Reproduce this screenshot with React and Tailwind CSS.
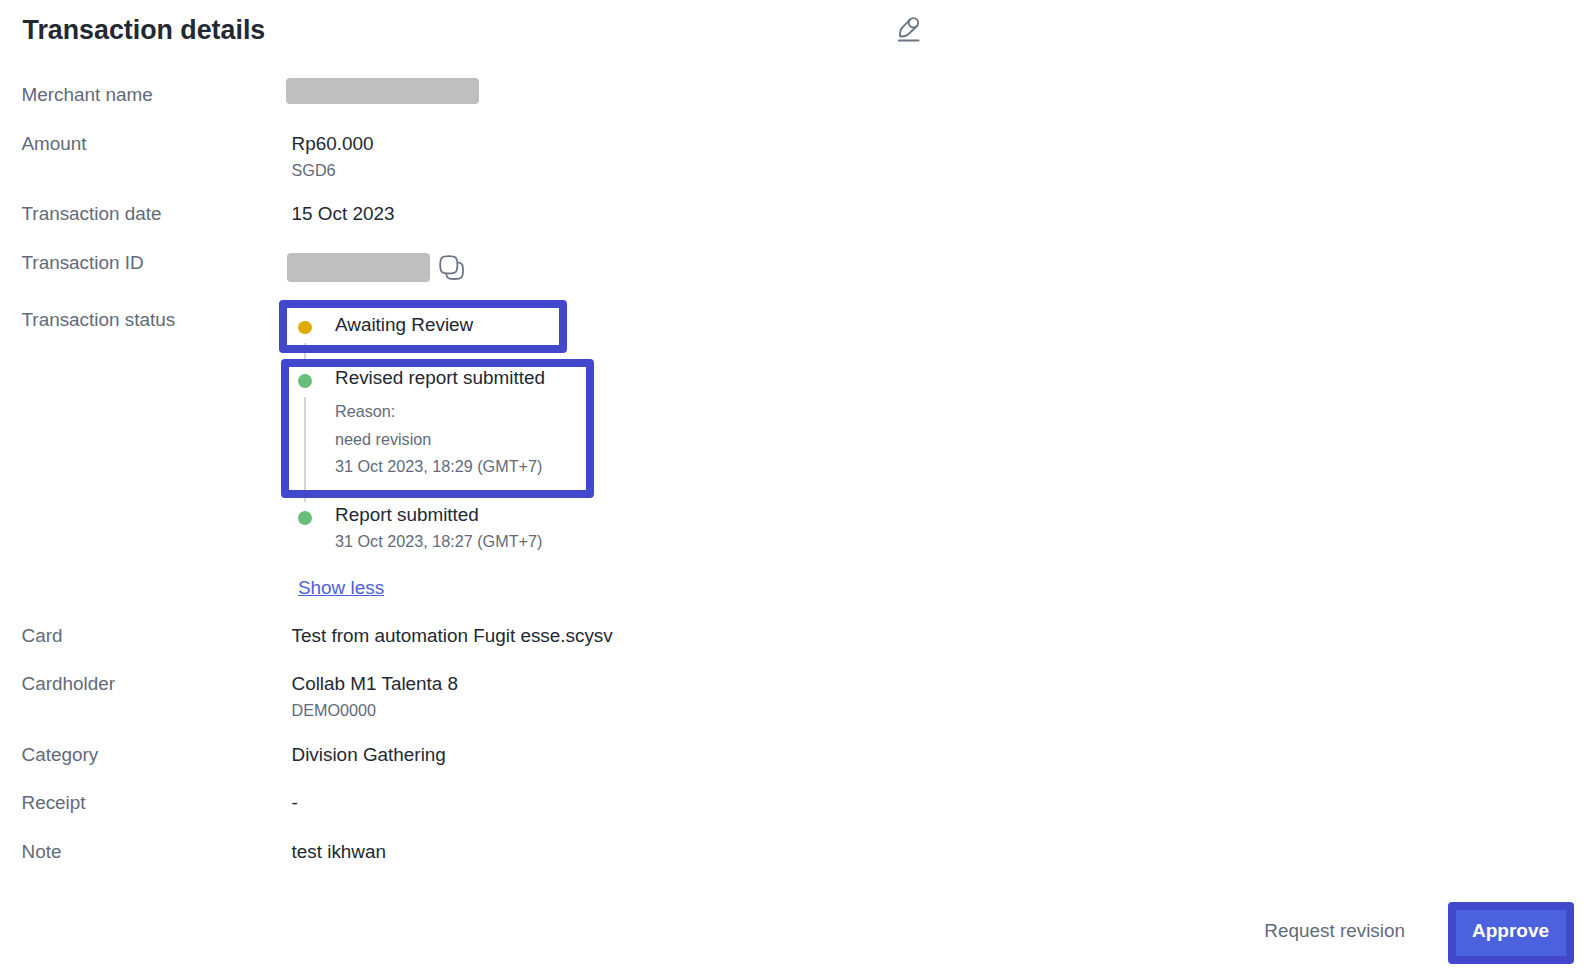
import React from "react";

const EditIcon = () => (
  <svg width="24" height="26" viewBox="0 0 24 26" fill="none" stroke="#6b7584" strokeWidth="1.9" strokeLinecap="round" strokeLinejoin="round">
    <circle cx="16.4" cy="5.8" r="4.7" />
    <path d="M12.9 2.7 5 10.9C3.2 13 2.8 16.4 3.2 19.5C6.2 19.7 9 19.2 11 17.5L19.7 9.2" />
    <path d="M1.8 23.5H21.6" />
  </svg>
);

const CopyIcon = () => (
  <svg width="26" height="26" viewBox="0 0 26 26" fill="none" stroke="#6b7584" strokeWidth="1.8">
    <path d="M9.8 1.2C17 1.2 18.4 2.6 18.4 9.8C18.4 17 17 18.4 9.8 18.4C2.6 18.4 1.2 17 1.2 9.8C1.2 2.6 2.6 1.2 9.8 1.2Z" />
    <path d="M18.4 7.3C23 7.6 24 9.2 24 15.4C24 22.6 22.6 24 15.4 24C9.4 24 7.6 23 7.2 18.4" />
  </svg>
);

const Row = ({ label, className, children }) => (
  <div className={`flex shrink-0 ${className}`}>
    <div className="w-[270px] shrink-0 text-[#626b79]">{label}</div>
    <div>{children}</div>
  </div>
);

const SubText = ({ children }) => (
  <p className="pt-px text-[16.2px] leading-6 text-[#626b79]">{children}</p>
);

const Dot = ({ className }) => (
  <span className={`mt-[9px] block h-3.5 w-3.5 rounded-full ${className}`} />
);

const App = () => {
  return (
    <div className="flex h-[969px] w-[1587px] flex-col overflow-hidden bg-white pl-[21.5px] font-['Liberation_Sans',Arial,sans-serif] text-[18.9px] leading-[26px] text-[#232933]">
      <div className="flex h-[82px] w-[899px] shrink-0 justify-between pt-4">
        <h1 className="pl-px text-[26.8px] leading-7 font-bold">Transaction details</h1>
        <button className="mt-px flex h-[26px] w-6" title="Edit">
          <EditIcon />
        </button>
      </div>

      <Row label="Merchant name" className="h-[49px]">
        <div className="-mt-1 -ml-[5.5px] h-[26px] w-[193px] rounded bg-[#bfbfbf]" />
      </Row>

      <Row label="Amount" className="h-[70px]">
        <p>Rp60.000</p>
        <SubText>SGD6</SubText>
      </Row>

      <Row label="Transaction date" className="h-[49px]">15 Oct 2023</Row>

      <Row label="Transaction ID" className="h-[57px]">
        <div className="-ml-[4.5px] flex gap-[9px] pt-[3px]">
          <div className="h-[29px] w-[143px] rounded bg-[#bfbfbf]" />
          <div className="pt-0.5">
            <CopyIcon />
          </div>
        </div>
      </Row>

      <Row label="Transaction status" className="h-[316px]">
        <div className="relative pt-[5px]">
          <div className="flex h-[53px] gap-[23px] pl-[6.5px]">
            <div className="flex flex-col items-center">
              <Dot className="bg-[#e0ab00]" />
              <span className="mt-[9px] h-[22px] w-0.5 shrink-0 bg-[#d0d6dd]" />
            </div>
            <p>Awaiting Review</p>
          </div>

          <div className="flex h-[137px] gap-[23px] pl-[6.5px]">
            <div className="flex flex-col items-center">
              <Dot className="bg-[#68be79]" />
              <span className="mt-[9px] h-[105px] w-0.5 shrink-0 bg-[#d0d6dd]" />
            </div>
            <div>
              <p>Revised report submitted</p>
              <div className="pt-2 text-[16.2px] leading-6 text-[#626b79]">
                <p className="h-7">Reason:</p>
                <p className="h-[27px]">need revision</p>
                <p>31 Oct 2023, 18:29 (GMT+7)</p>
              </div>
            </div>
          </div>

          <div className="flex h-[73px] gap-[23px] pl-[6.5px]">
            <Dot className="bg-[#68be79]" />
            <div>
              <p>Report submitted</p>
              <SubText>31 Oct 2023, 18:27 (GMT+7)</SubText>
            </div>
          </div>

          <a href="#" className="pl-[6.5px] text-[#4b61dd]">
            <span className="underline decoration-1 underline-offset-1">Show less</span>
          </a>

          {/* highlight frames */}
          <div className="absolute -top-[7px] -left-[12.5px] h-[53px] w-[288px] rounded border-8 border-[#4148cc]" />
          <div className="absolute top-[52px] -left-[10.5px] h-[139px] w-[313px] rounded border-8 border-[#4148cc]" />
        </div>
      </Row>

      <Row label="Card" className="h-12">Test from automation Fugit esse.scysv</Row>

      <Row label="Cardholder" className="h-[71px]">
        <p>Collab M1 Talenta 8</p>
        <SubText>DEMO0000</SubText>
      </Row>

      <Row label="Category" className="h-12">Division Gathering</Row>
      <Row label="Receipt" className="h-[49px]">-</Row>
      <Row label="Note" className="h-[63px]">test ikhwan</Row>

      <div className="flex h-[62px] shrink-0 items-center justify-end gap-[43px] pr-[13px]">
        <button className="pb-1 text-[#626b79]">Request revision</button>
        <button className="h-[62px] w-[126px] rounded border-8 border-[#4148cc] bg-[#4c61dd] pr-px pb-1 text-[19px] font-bold text-white">
          Approve
        </button>
      </div>
    </div>
  );
};

export default App;
